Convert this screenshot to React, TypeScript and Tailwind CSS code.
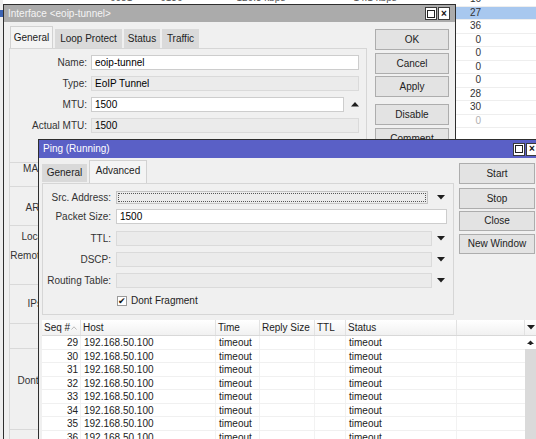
import React from "react";

const listRows = [
  { v: "16" },
  { v: "27", sel: true },
  { v: "36" },
  { v: "0" },
  { v: "0" },
  { v: "0" },
  { v: "0" },
  { v: "28" },
  { v: "30" },
  { v: "0", dim: true },
  { v: "" },
];

const seqRows = [29, 30, 31, 32, 33, 34, 35, 36];

const cols = [
  { w: "w-[39px]", label: "Seq #" },
  { w: "w-[135px]", label: "Host" },
  { w: "w-[44px]", label: "Time" },
  { w: "w-[55px]", label: "Reply Size" },
  { w: "w-[31px]", label: "TTL" },
  { w: "w-[111px]", label: "Status" },
  { w: "w-[68px]", label: "" },
];

function Down() {
  return (
    <svg width="8" height="5" viewBox="0 0 8 5" aria-hidden>
      <polygon points="0,0 8,0 4,4.5" fill="#1e1e1e" />
    </svg>
  );
}

function Up() {
  return (
    <svg width="8" height="5" viewBox="0 0 8 5" aria-hidden>
      <polygon points="0,4.5 8,4.5 4,0" fill="#1e1e1e" />
    </svg>
  );
}

function WinBtns() {
  return (
    <div className="flex gap-[1px]">
      <div className="flex h-[13px] w-[12px] items-center justify-center border border-[#3a3a3a] bg-white">
        <div className="h-[8px] w-[8px] border border-[#222]" />
      </div>
      <div className="flex h-[13px] w-[12px] items-center justify-center border border-[#3a3a3a] bg-white text-[10px] font-bold leading-none text-[#111]">
        ×
      </div>
    </div>
  );
}

const btn =
  "flex shrink-0 items-center justify-center border border-[#adadad] bg-[#e3e3e3] text-[10px] text-[#222]";
const grayInput = "h-full border border-[#dadada] bg-[#ebebeb]";
const whiteInput = "h-full border border-[#cdcdcd] bg-white pl-[3px] flex items-center";

function InterfaceWindow() {
  const hidden = "flex h-[12px] shrink-0 items-center";
  const lbl = "w-[77px] shrink-0 text-right text-[#333]";
  const sep = "h-px shrink-0 bg-[#d9d9d9]";
  const row = "flex h-[15px] shrink-0 items-center";
  return (
    <div className="absolute left-[3px] top-[4px] flex h-[440px] w-[453px] flex-col border border-[#2e2e2e] bg-[#f0f0f0]">
      <div className="flex h-[17px] shrink-0 items-center justify-between bg-[#ababab] pl-[4px] pr-[5px] text-[10px] text-[#f4f4f4]">
        <span>Interface &lt;eoip-tunnel&gt;</span>
        <WinBtns />
      </div>
      <div className="flex shrink-0">
        <div className="flex w-[363px] flex-col pl-[5px]">
          <div className="mt-[4px] flex h-[22px] shrink-0 items-end gap-[2px] pl-[1px]">
            <div className="flex h-[22px] w-[43px] items-center justify-center border border-b-0 border-[#d2d2d2] bg-[#f4f4f4] text-[#222]">
              General
            </div>
            <div className="flex h-[19px] w-[67px] items-center justify-center bg-[#dadada] text-[#222]">
              Loop Protect
            </div>
            <div className="flex h-[19px] w-[36px] items-center justify-center bg-[#dadada] text-[#222]">
              Status
            </div>
            <div className="flex h-[19px] w-[37px] items-center justify-center bg-[#dadada] text-[#222]">
              Traffic
            </div>
          </div>
          <div className="flex h-[395px] w-[358px] shrink-0 flex-col border border-[#d6d6d6] pt-[6px]">
            <div className={row}>
              <div className={lbl}>Name:</div>
              <div className={`ml-[4px] w-[268px] ${whiteInput}`}>eoip-tunnel</div>
            </div>
            <div className={`mt-[6px] ${row}`}>
              <div className={lbl}>Type:</div>
              <div className={`ml-[4px] flex w-[268px] items-center pl-[3px] ${grayInput}`}>EoIP Tunnel</div>
            </div>
            <div className={`mt-[6px] ${row}`}>
              <div className={lbl}>MTU:</div>
              <div className={`ml-[4px] w-[253px] ${whiteInput}`}>1500</div>
              <div className="ml-[7px] flex items-center">
                <Up />
              </div>
            </div>
            <div className={`mt-[6px] ${row}`}>
              <div className={lbl}>Actual MTU:</div>
              <div className={`ml-[4px] flex w-[268px] items-center pl-[3px] ${grayInput}`}>1500</div>
            </div>
            <div className={`mt-[29px] ${sep}`} />
            <div className={hidden}>
              <div className={lbl}>MAC Address:</div>
            </div>
            <div className={`mt-[11px] ${sep}`} />
            <div className={`mt-[15px] ${hidden}`}>
              <div className={lbl}>ARP Timeout:</div>
            </div>
            <div className={`mt-[11px] ${sep}`} />
            <div className={`mt-[5px] ${hidden}`}>
              <div className={lbl}>Local Address:</div>
            </div>
            <div className={`mt-[7px] ${hidden}`}>
              <div className={lbl}>Remote Address:</div>
            </div>
            <div className={`mt-[22px] ${sep}`} />
            <div className={`mt-[13px] ${hidden}`}>
              <div className={lbl}>IPsec Secret:</div>
            </div>
            <div className={`mt-[13px] ${sep}`} />
            <div className={`mt-[24px] ${sep}`} />
            <div className={`mt-[26px] ${hidden}`}>
              <div className={lbl}>Dont Fragment:</div>
            </div>
            <div className={`mt-[42px] ${sep}`} />
          </div>
        </div>
        <div className="ml-[8px] mt-[7px] flex w-[74px] flex-col">
          <div className={`${btn} h-[21px] border-[#2c2c2c]`}>OK</div>
          <div className={`${btn} mt-[3px] h-[21px]`}>Cancel</div>
          <div className={`${btn} mt-[2px] h-[21px]`}>Apply</div>
          <div className={`${btn} mt-[7px] h-[21px]`}>Disable</div>
          <div className={`${btn} mt-[3px] h-[21px]`}>Comment</div>
        </div>
      </div>
    </div>
  );
}

function PingWindow() {
  const lbl = "w-[68px] shrink-0 text-right text-[#333]";
  return (
    <div className="absolute left-[38px] top-[139px] flex h-[320px] w-[504px] flex-col border border-[#2e2e2e] bg-[#f0f0f0]">
      <div className="flex h-[18px] shrink-0 items-center justify-between bg-[#5a60c6] pl-[4px] pr-[3px] text-[10px] text-white">
        <span>Ping (Running)</span>
        <WinBtns />
      </div>
      <div className="flex shrink-0">
        <div className="flex w-[415px] flex-col pl-[3px]">
          <div className="flex h-[25px] shrink-0 items-end gap-[2px]">
            <div className="mb-px flex h-[18px] w-[45px] items-center justify-center bg-[#d9d9d9] text-[#222]">
              General
            </div>
            <div className="flex h-[23px] w-[58px] items-center justify-center border border-b-0 border-[#d2d2d2] bg-[#f4f4f4] pb-[2px] text-[#222]">
              Advanced
            </div>
          </div>
          <div className="flex h-[132px] w-[412px] shrink-0 flex-col border border-[#d6d6d6] pt-[7px]">
            <div className="flex h-[13px] shrink-0 items-center">
              <div className={lbl}>Src. Address:</div>
              <div className="ml-[5px] h-full w-[312px] border border-[#c4c4c4] bg-[#ececec] p-px">
                <div className="h-full w-full border border-dotted border-[#555]" />
              </div>
              <div className="ml-[9px] flex items-center">
                <Down />
              </div>
            </div>
            <div className="mt-[5px] flex h-[15px] shrink-0 items-center">
              <div className={lbl}>Packet Size:</div>
              <div className={`ml-[5px] w-[331px] ${whiteInput}`}>1500</div>
            </div>
            {["TTL:", "DSCP:", "Routing Table:"].map((t, i) => (
              <div key={t} className={`flex h-[15px] shrink-0 items-center ${i === 0 ? "mt-[7px]" : "mt-[6px]"}`}>
                <div className={lbl}>{t}</div>
                <div className={`ml-[5px] w-[316px] ${grayInput}`} />
                <div className="ml-[5px] flex items-center">
                  <Down />
                </div>
              </div>
            ))}
            <div className="mt-[7px] flex h-[12px] shrink-0 items-center pl-[74px]">
              <div className="flex h-[10px] w-[10px] items-center justify-center border border-[#9a9a9a] bg-white text-[9px] leading-none text-[#111]">
                ✔
              </div>
              <span className="ml-[4px] text-[#222]">Dont Fragment</span>
            </div>
          </div>
        </div>
        <div className="ml-[5px] mt-[5px] flex w-[76px] flex-col">
          <div className={`${btn} h-[21px]`}>Start</div>
          <div className={`${btn} mt-[4px] h-[21px] border-[#2c2c2c]`}>Stop</div>
          <div className={`${btn} mt-[2px] h-[20px]`}>Close</div>
          <div className={`${btn} mt-[3px] h-[20px]`}>New Window</div>
        </div>
      </div>
      <div className="ml-[3px] mt-[5px] flex w-[494px] shrink-0 flex-col">
        <div className="flex h-[16px] shrink-0 border-b border-[#d8d8d8] bg-gradient-to-b from-white to-[#f1f1f1]">
          {cols.map((c, i) => (
            <div
              key={i}
              className={`${c.w} flex items-center justify-between border-r border-[#e2e2e2] pl-[2px] text-[#222]`}
            >
              <span>{c.label}</span>
              {i === 0 && (
                <svg width="6" height="4" viewBox="0 0 6 4" className="mr-[3px]" aria-hidden>
                  <polyline points="0.5,3.5 3,0.8 5.5,3.5" fill="none" stroke="#b9b9b9" strokeWidth="1" />
                </svg>
              )}
            </div>
          ))}
          <div className="flex w-[11px] items-center justify-center">
            <Down />
          </div>
        </div>
        <div className="flex">
          <div className="flex flex-col bg-white">
            {seqRows.map((n) => (
              <div key={n} className="flex h-[13.5px] shrink-0 border-b border-[#f0f0f0] text-[#222]">
                <div className="w-[39px] border-r border-[#f2f2f2] pr-[2px] text-right leading-[13px]">{n}</div>
                <div className="w-[135px] border-r border-[#f2f2f2] pl-[3px] leading-[13px]">192.168.50.100</div>
                <div className="w-[44px] border-r border-[#f2f2f2] pl-[3px] leading-[13px]">timeout</div>
                <div className="w-[55px] border-r border-[#f2f2f2]" />
                <div className="w-[31px] border-r border-[#f2f2f2]" />
                <div className="w-[111px] border-r border-[#f2f2f2] pl-[3px] leading-[13px]">timeout</div>
                <div className="w-[68px]" />
              </div>
            ))}
          </div>
          <div className="flex w-[11px] flex-col">
            <div className="flex h-[13px] items-center justify-center bg-white">
              <svg width="7" height="5" viewBox="0 0 7 5" aria-hidden>
                <polygon points="0,4 7,4 3.5,0.5" fill="#222" />
                <rect x="2.5" y="3" width="2" height="2" fill="#222" />
              </svg>
            </div>
            <div className="h-[100px] bg-[#dadada]" />
          </div>
        </div>
      </div>
    </div>
  );
}

export default function App() {
  return (
    <div className="relative h-[439px] w-[536px] overflow-hidden bg-white font-['Liberation_Sans',Arial,sans-serif] text-[10px] leading-none">
      {/* left sliver of another window */}
      <div className="absolute left-0 top-0 h-[439px] w-[3px] bg-[#ededed]">
        <div className="mt-[10px] h-[7px] w-[3px] bg-[#3b63b3]" />
      </div>
      {/* cut-off text above the interface window */}
      <div className="absolute left-[3px] top-0 flex h-[4px] w-[453px] overflow-hidden text-[#555]">
        <span className="ml-[107px] mt-[-7px]">6081</span>
        <span className="ml-[28px] mt-[-7px]">6136</span>
        <span className="ml-[54px] mt-[-7px]">126.3 kbps</span>
        <span className="ml-[68px] mt-[-7px]">14.1 kbps</span>
      </div>
      {/* list behind on the right */}
      <div className="absolute left-[456px] top-[-7px] flex w-[80px] flex-col">
        {listRows.map((r, i) => (
          <div
            key={i}
            className={`flex h-[13.5px] items-center border-b border-[#eeeeee] ${r.sel ? "bg-[#a8c8ef]" : "bg-white"}`}
          >
            <div className={`w-[25px] text-right ${r.dim ? "text-[#b0b0b0]" : "text-[#333]"}`}>{r.v}</div>
          </div>
        ))}
      </div>
      <InterfaceWindow />
      <PingWindow />
    </div>
  );
}
